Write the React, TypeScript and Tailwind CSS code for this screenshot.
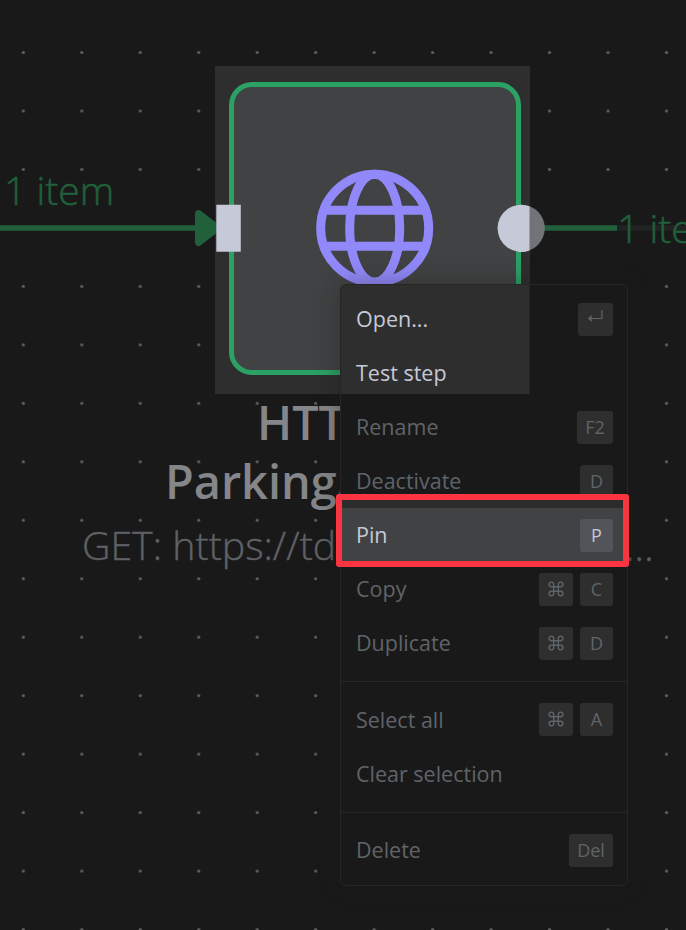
import { Fragment } from 'react';

type Item = { label: string; keys?: string[]; active?: boolean; lit?: boolean };

const groups: Item[][] = [
  [
    { label: 'Open...', keys: ['↵'], lit: true },
    { label: 'Test step', lit: true },
    { label: 'Rename', keys: ['F2'] },
    { label: 'Deactivate', keys: ['D'] },
    { label: 'Pin', keys: ['P'], lit: true, active: true },
    { label: 'Copy', keys: ['⌘', 'C'] },
    { label: 'Duplicate', keys: ['⌘', 'D'] },
  ],
  [{ label: 'Select all', keys: ['⌘', 'A'] }, { label: 'Clear selection' }],
  [{ label: 'Delete', keys: ['Del'] }],
];

function Glyph({ name }: { name: string }) {
  if (name === '↵')
    return (
      <svg width="17" height="14" viewBox="0 0 17 14" fill="none" className="-mt-[5px]">
        <path d="M14.900 1v8.500H4" stroke="currentColor" strokeWidth="1.200" />
        <path d="M1 9.500 4.600 6v7Z" fill="currentColor" />
      </svg>
    );
  if (name === '⌘')
    return (
      <svg width="16" height="16" viewBox="0 0 16 16" fill="none" stroke="currentColor" strokeWidth="1.400">
        <path d="M5.700 5.700h4.600v4.600H5.700ZM5.700 5.700H3.400a2.300 2.300 0 1 1 2.300-2.300ZM10.300 5.700V3.400a2.300 2.300 0 1 1 2.300 2.300ZM10.300 10.300h2.300a2.300 2.300 0 1 1-2.300 2.300ZM5.700 10.300v2.300a2.300 2.300 0 1 1-2.300-2.300Z" />
      </svg>
    );
  return <span>{name}</span>;
}

const keyWidth: Record<string, string> = {
  '↵': 'w-[35px]',
  '⌘': 'w-[34px]',
  F2: 'w-[36px]',
  Del: 'w-[44px]',
};

function MenuItem({ label, keys = [], active, lit }: Item) {
  return (
    <li className={`flex h-[54px] items-center justify-between pr-[14px] pl-[15px] ${active ? 'bg-[#414243]' : ''}`}>
      <span className={`pb-[0.5px] text-[21.5px] leading-none ${lit ? 'text-[#c5c9d8]' : 'text-[#5f6468]'}`}>{label}</span>
      <span className="flex gap-[7px]">
        {keys.map((k) => (
          <kbd
            key={k}
            className={`flex h-[33px] items-center justify-center rounded-[3px] pb-px font-[inherit] text-[18px] leading-none ${keyWidth[k] ?? 'w-[33px]'} ${active ? 'bg-[#525459] text-[#c5c9d8]' : 'bg-[#2e2e2e] text-[#5f6468]'}`}
          >
            <Glyph name={k} />
          </kbd>
        ))}
      </span>
    </li>
  );
}

function ContextMenu() {
  return (
    <div className="absolute top-[284px] left-[340px] h-[602px] w-[288px] rounded-[6px] border border-[#262626] bg-[linear-gradient(#2e2e2e,#2e2e2e),linear-gradient(#2c2c2c,#2c2c2c)] bg-[length:188.5px_109px,100%_8px] bg-[position:0_0,0_215px] bg-no-repeat bg-[#191919] py-[7px] shadow-[0_0_24px_rgba(25,27,26,0.4)]">
      <ul>
        {groups.map((group, i) => (
          <Fragment key={i}>
            {i > 0 && <li className="mt-[11px] mb-[10.700px] h-px bg-[#262626]" />}
            {group.map((item) => (
              <MenuItem key={item.label} {...item} />
            ))}
          </Fragment>
        ))}
      </ul>
    </div>
  );
}

function Globe() {
  return (
    <svg width="118" height="118" viewBox="0 0 118 118" fill="none" stroke="#9189fa" strokeWidth="9">
      <circle cx="58.700" cy="59.200" r="54" />
      <ellipse cx="58.700" cy="59.200" rx="25" ry="54" />
      <path d="M9 41.200h100M9 77.200h100" />
    </svg>
  );
}

function WorkflowNode() {
  return (
    <section className="absolute top-[66px] left-[82px] w-[600px] whitespace-nowrap">
      <div className="ml-[133px] h-[328px] w-[314.500px] bg-[#2e2e2e] pt-[16px] pl-[13.500px]">
        <div className="flex h-[292.500px] w-[292.500px] items-center justify-center rounded-[23px] border-[5px] border-[#2ba164] bg-[#414243]">
          <Globe />
        </div>
      </div>
      <h1 className="-mt-[1.500px] text-[46.800px] leading-[59px] font-semibold text-[#858689]">
        <span className="block pl-[175px]">HTT</span>
        <span className="block pl-[83px]">Parking/</span>
      </h1>
      <p className="mt-[8px] flex text-[39.300px] leading-[53px] font-light text-[#5f6165] [-webkit-text-stroke:0.4px_#5f6165]">
        <span className="w-[542.500px]">GET: https://td</span>
        <span className="text-[41px]">...</span>
      </p>
    </section>
  );
}

export default function App() {
  return (
    <main className="relative h-[930px] w-[686px] overflow-hidden bg-[#191919] font-['Open_Sans','Noto_Sans',sans-serif]">
      <svg className="absolute inset-0" width="686" height="930">
        <defs>
          <pattern id="grid" x="-5.900" y="23.250" width="58.470" height="58.470" patternUnits="userSpaceOnUse">
            <circle cx="29.235" cy="29.235" r="1.600" fill="#5f6062" />
          </pattern>
        </defs>
        <rect width="686" height="930" fill="url(#grid)" />
        <path d="M0 228h198M543 228h74" stroke="#20603b" strokeWidth="5.600" />
        <path d="M617 228h69" stroke="#222423" strokeWidth="5.600" />
      </svg>
      <span className="absolute top-[163px] left-[4px] text-[39px] leading-[53px] font-light whitespace-nowrap text-[#20603b] [-webkit-text-stroke:0.5px_#20603b]">1 item</span>
      <span className="absolute top-[201px] left-[617px] text-[39px] leading-[53px] font-light whitespace-nowrap text-[#20603b] [-webkit-text-stroke:0.5px_#20603b]">1 item</span>

      <WorkflowNode />

      {/* connection arrow and the node's input and output handles */}
      <svg className="absolute inset-0" width="686" height="300">
        <path d="M198.500 213.500 217.500 228 198.500 242.500Z" fill="#20603b" stroke="#20603b" strokeWidth="7" strokeLinejoin="round" />
        <path d="M216.300 204.800h24.500v47h-24.500Z" fill="#c5c9d8" />
        <circle cx="521.200" cy="228.300" r="23.600" fill="#717378" />
        <path d="M529.500 206.200A23.600 23.600 0 1 0 529.500 250.400Z" fill="#c5c9d8" />
      </svg>

      <ContextMenu />
      <div className="absolute top-[494px] left-[335.500px] h-[73px] w-[293.500px] rounded-[3px] border-[6px] border-[#fb3442]" />
    </main>
  );
}
